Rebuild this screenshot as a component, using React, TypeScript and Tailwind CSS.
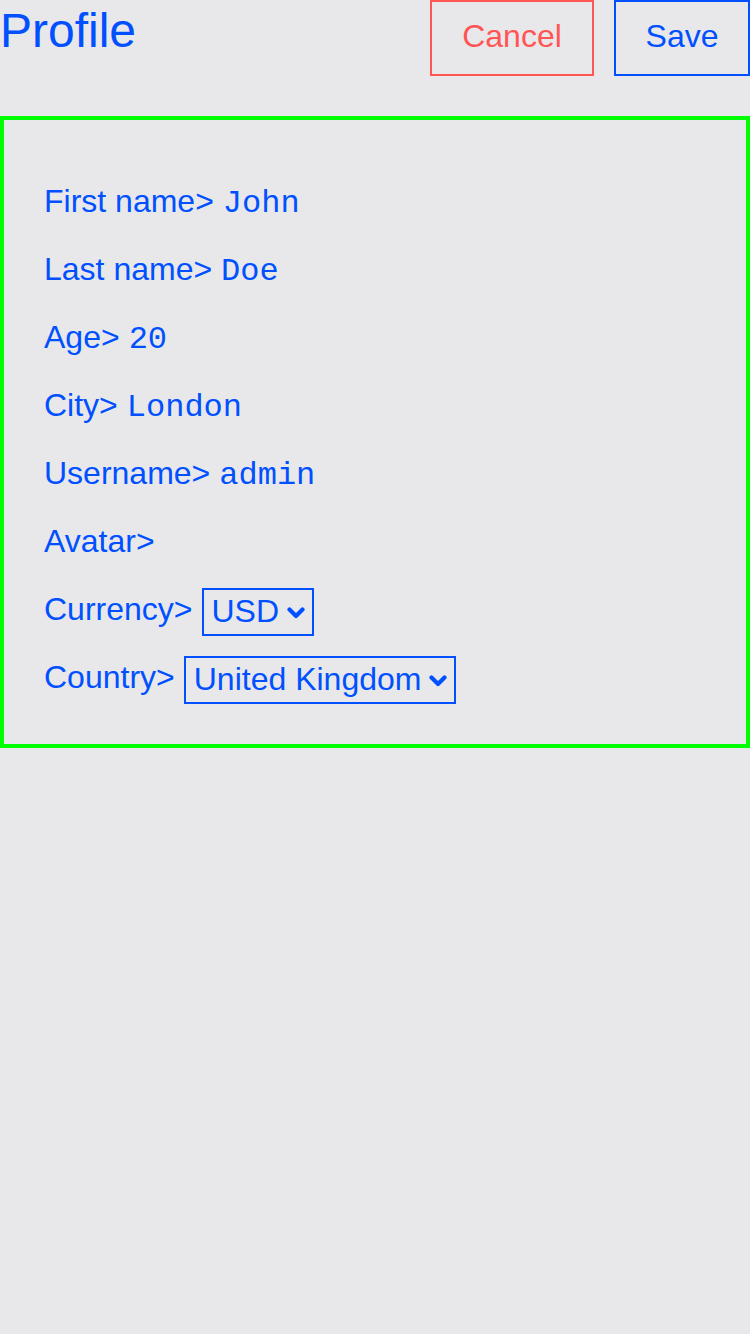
import { useState } from "react";

const rows = [
  { label: "First name>", value: "John" },
  { label: "Last name>", value: "Doe" },
  { label: "Age>", value: "20" },
  { label: "City>", value: "London" },
  { label: "Username>", value: "admin" },
  { label: "Avatar>", value: "" },
];

function Chevron() {
  return (
    <svg width="18" height="12" viewBox="0 0 18 12" fill="none" className="mt-[4px] shrink-0">
      <path d="M2.5 2.5 L9 9 L15.5 2.5" stroke="#0050ff" strokeWidth="4.2" strokeLinecap="round" strokeLinejoin="round" />
    </svg>
  );
}

function Picker({ value }: { value: string }) {
  return (
    <div className="mt-[3px] inline-flex h-[48px] items-center gap-[8px] border-2 border-[#0050ff] pr-[7px] pb-[3px] pl-[8px]">
      <span>{value}</span>
      <Chevron />
    </div>
  );
}

export default function App() {
  const [currency] = useState("USD");
  const [country] = useState("United Kingdom");

  return (
    <div
      className="min-h-[1334px] w-[750px] bg-[#e8e8ea] text-[32px] text-[#0050ff]"
      style={{ fontFamily: '"Liberation Sans", Arial, sans-serif' }}
    >
      <header className="flex items-start">
        <h1 className="mt-[3px] text-[48px] leading-[normal]">Profile</h1>
        <div className="ml-auto flex gap-[20px]">
          <button className="h-[76px] w-[164px] border-2 border-[#ff5555] pb-[5px] text-[#ff5555]">
            Cancel
          </button>
          <button className="h-[76px] w-[136px] border-2 border-[#0050ff] pb-[5px]">
            Save
          </button>
        </div>
      </header>

      <section className="mt-[40px] border-4 border-[#00ff00] px-10 pt-[57px] pb-[23px]">
        {rows.map((row) => (
          <div key={row.label} className="flex h-[68px] items-baseline">
            <span>{row.label}</span>
            {row.value && (
              <span
                className="ml-[9px]"
                style={{ fontFamily: '"Liberation Mono", "Courier New", monospace' }}
              >
                {row.value}
              </span>
            )}
          </div>
        ))}
        <div className="flex h-[68px] items-start gap-[9px]">
          <span>Currency&gt;</span>
          <Picker value={currency} />
        </div>
        <div className="flex h-[68px] items-start gap-[9px]">
          <span>Country&gt;</span>
          <Picker value={country} />
        </div>
      </section>
    </div>
  );
}
